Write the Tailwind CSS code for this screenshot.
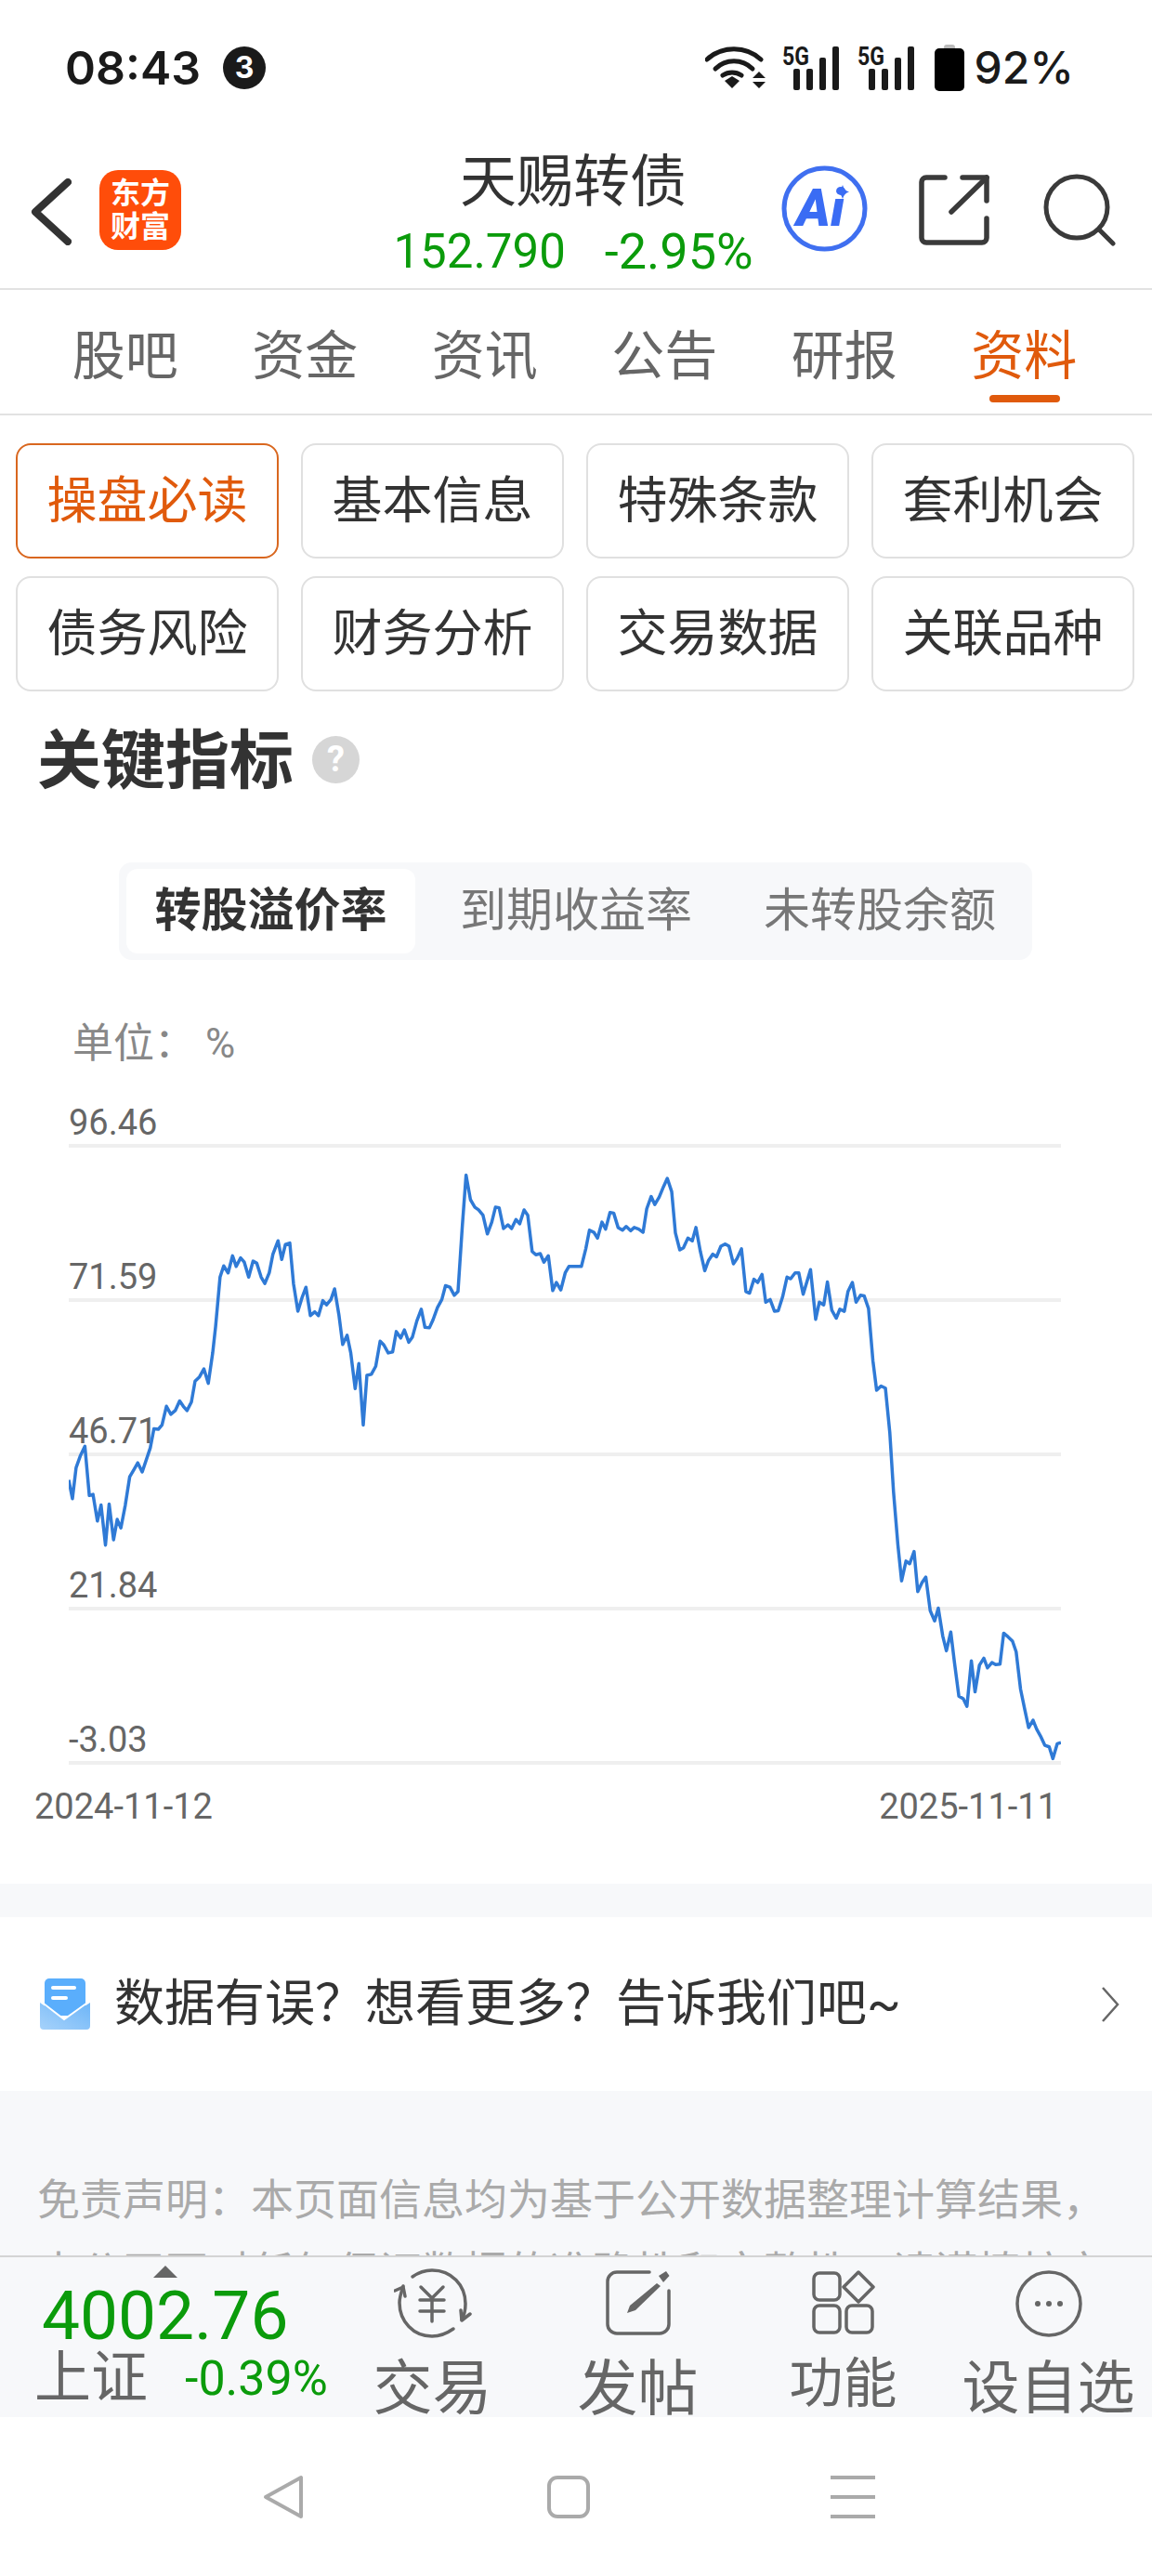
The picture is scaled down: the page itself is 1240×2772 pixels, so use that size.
<!DOCTYPE html>
<html lang="zh-CN">
  <head>
    <meta charset="UTF-8" />
    <meta name="viewport" content="width=device-width, initial-scale=1.0" />
    <title>天赐转债</title>
    <script src="https://cdn.jsdelivr.net/npm/@tailwindcss/browser@4"></script>
  </head>
  <body class="bg-white text-[#333] font-['Roboto','Noto_Sans_CJK_SC',sans-serif]">
    <div class="w-[1240px] h-[2772px] overflow-hidden">
      <!-- Status bar -->
      <div class="h-[146px] flex items-center pl-[70px] pr-[84px] text-[#1a1a1a] font-['Inter',sans-serif]">
        <span class="text-[50px] leading-none font-semibold w-[170px]">08:43</span>
        <span class="w-[46px] h-[46px] rounded-full bg-[#1a1a1a] text-white text-[32px] font-bold flex items-center justify-center">3</span>
        <div class="ml-auto flex items-center">
          <svg width="65" height="46" viewBox="0 0 65 46" fill="none" stroke="#1a1a1a" stroke-width="5" stroke-linecap="round">
            <path d="M2 14 C18 -1 44 -1 60 14" />
            <path d="M11 24 C22 13 40 13 51 24" />
            <path d="M19 31 C25 27 33 27 39 31" />
            <path d="M21 37 L29 32 L37 37 L29 45 Z" fill="#1a1a1a" stroke="none" />
            <path d="M51 34 L58 27 L65 34 Z M51 38 L65 38 L58 45 Z" fill="#1a1a1a" stroke="none" />
          </svg>
          <svg class="ml-[18px]" width="62" height="48" viewBox="0 0 62 48" fill="#1a1a1a">
            <text x="0" y="21" font-size="28" font-weight="700" font-family="Roboto" textLength="29" lengthAdjust="spacingAndGlyphs">5G</text>
            <rect x="12" y="25" width="7" height="23" rx="2" />
            <rect x="26" y="25" width="7" height="23" rx="2" />
            <rect x="40" y="13" width="7" height="35" rx="2" />
            <rect x="54" y="1" width="7" height="47" rx="2" />
          </svg>
          <svg class="ml-[19px]" width="62" height="48" viewBox="0 0 62 48" fill="#1a1a1a">
            <text x="0" y="21" font-size="28" font-weight="700" font-family="Roboto" textLength="29" lengthAdjust="spacingAndGlyphs">5G</text>
            <rect x="12" y="25" width="7" height="23" rx="2" />
            <rect x="26" y="25" width="7" height="23" rx="2" />
            <rect x="40" y="13" width="7" height="35" rx="2" />
            <rect x="54" y="1" width="7" height="47" rx="2" />
          </svg>
          <svg class="ml-[21px]" width="32" height="50" viewBox="0 0 32 50">
            <rect x="10" y="0" width="12" height="6" rx="3" fill="#bbb" />
            <rect x="0" y="4" width="32" height="46" rx="5" fill="#000" />
          </svg>
          <span class="ml-[11px] text-[48px] leading-none font-medium">92%</span>
        </div>
      </div>

      <!-- Header -->
      <div class="h-[166px] flex items-start border-b-2 border-[#e2e2e2]">
        <svg class="ml-[33px] mt-[46px]" width="44" height="72" viewBox="0 0 44 72" fill="none" stroke="#333" stroke-width="8" stroke-linecap="round" stroke-linejoin="round">
          <path d="M40 4 L5 36 L40 68" />
        </svg>
        <div class="ml-[30px] mt-[37px] w-[88px] h-[86px] rounded-[20px] bg-[#ff4d0a] text-white text-[32px] leading-[36px] font-bold text-center flex flex-col justify-center">
          <span>东方</span>
          <span>财富</span>
        </div>
        <div class="w-[438px] ml-[203px] pt-[15px] flex flex-col items-center">
          <div class="text-[61px] leading-[70px]">天赐转债</div>
          <div class="mt-[10px] h-[60px] flex items-center gap-[42px] leading-[60px] text-[#0b9b0b]">
            <span class="text-[51px]">152.790</span>
            <span class="text-[54px]">-2.95%</span>
          </div>
        </div>
        <svg class="ml-[5px] mt-[32px]" width="93" height="93" viewBox="0 0 93 93">
          <circle cx="46.5" cy="46.5" r="43.5" fill="none" stroke="#3f6ff0" stroke-width="5" />
          <text x="16" y="65" font-size="56" font-weight="900" font-style="italic" font-family="Roboto" fill="#3a6cf4">Ai</text>
          <path d="M66 21 Q67.5 27 73 28.5 Q67.5 30 66 36 Q64.5 30 59 28.5 Q64.5 27 66 21 Z" fill="#3a6cf4" />
        </svg>
        <svg class="ml-[55px] mt-[42px]" width="76" height="76" viewBox="0 0 76 76" fill="none" stroke="#3a3a3a" stroke-width="5.5" stroke-linecap="round" stroke-linejoin="round">
          <path d="M28 3 H8 A5 5 0 0 0 3 8 V68 A5 5 0 0 0 8 73 H68 A5 5 0 0 0 73 68 V47" />
          <path d="M47 3 H73 V28" />
          <path d="M73 3 L35 40" />
        </svg>
        <svg class="ml-[58px] mt-[41px]" width="78" height="78" viewBox="0 0 78 78" fill="none" stroke="#3a3a3a" stroke-width="5" stroke-linecap="round">
          <circle cx="36" cy="36" r="33" />
          <path d="M60 60 L75 75" />
        </svg>
      </div>

      <!-- Tabs -->
      <div class="h-[135px] pt-[10px] flex px-[38px] border-b-2 border-[#e2e2e2] text-[57px] text-[#666]">
        <div class="w-[193.5px] flex items-center justify-center">股吧</div>
        <div class="w-[193.5px] flex items-center justify-center">资金</div>
        <div class="w-[193.5px] flex items-center justify-center">资讯</div>
        <div class="w-[193.5px] flex items-center justify-center">公告</div>
        <div class="w-[193.5px] flex items-center justify-center">研报</div>
        <div class="w-[193.5px] flex items-center justify-center relative text-[#e05a0c]">
          资料
          <span class="absolute bottom-[12px] left-[59px] w-[76px] h-[8px] rounded-full bg-[#e05a0c]"></span>
        </div>
      </div>

      <!-- Sub navigation -->
      <div class="pt-[30px] pl-[17px] grid grid-cols-[repeat(4,283px)] gap-x-[24px] gap-y-[19px] text-[54px]">
        <div class="h-[124px] rounded-[16px] border-2 border-[#d9671f] text-[#e05a0c] flex items-center justify-center">操盘必读</div>
        <div class="h-[124px] rounded-[16px] border-2 border-[#e0e0e0] flex items-center justify-center">基本信息</div>
        <div class="h-[124px] rounded-[16px] border-2 border-[#e0e0e0] flex items-center justify-center">特殊条款</div>
        <div class="h-[124px] rounded-[16px] border-2 border-[#e0e0e0] flex items-center justify-center">套利机会</div>
        <div class="h-[124px] rounded-[16px] border-2 border-[#e0e0e0] flex items-center justify-center">债务风险</div>
        <div class="h-[124px] rounded-[16px] border-2 border-[#e0e0e0] flex items-center justify-center">财务分析</div>
        <div class="h-[124px] rounded-[16px] border-2 border-[#e0e0e0] flex items-center justify-center">交易数据</div>
        <div class="h-[124px] rounded-[16px] border-2 border-[#e0e0e0] flex items-center justify-center">关联品种</div>
      </div>

      <!-- Key indicators -->
      <div class="mt-[36px] pl-[40px] h-[80px] flex items-center">
        <span class="text-[69px] leading-[80px] font-bold">关键指标</span>
        <span class="ml-[20px] -mt-[6px] w-[51px] h-[51px] rounded-full bg-[#d6d6d6] text-white text-[38px] font-bold flex items-center justify-center">?</span>
      </div>

      <div class="mt-[68px] ml-[128px] w-[983px] h-[105px] rounded-[14px] bg-[#f7f8fa] flex items-center pl-[8px] text-[50px] text-[#777]">
        <div class="w-[311px] h-[91px] rounded-[12px] bg-white font-bold text-[#333] flex items-center justify-center">转股溢价率</div>
        <div class="w-[346px] text-center">到期收益率</div>
        <div class="w-[308px] text-center">未转股余额</div>
      </div>

      <!-- Chart -->
      <div class="h-[994px]">
        <div class="pt-[62px] pl-[78px] h-[117px] text-[44px] leading-[56px] text-[#888] whitespace-pre">单位： %</div>
        <div class="ml-[74px] w-[1068px] relative text-[38px] leading-[46px] text-[#666]">
          <div class="h-[85px] border-b-4 border-[#efefef] flex items-end">96.46</div>
          <div class="h-[166px] border-b-4 border-[#efefef] flex items-end">71.59</div>
          <div class="h-[166px] border-b-4 border-[#efefef] flex items-end">46.71</div>
          <div class="h-[166px] border-b-4 border-[#efefef] flex items-end">21.84</div>
          <div class="h-[166px] border-b-4 border-[#efefef] flex items-end">-3.03</div>
          <svg class="absolute left-0 top-[83px]" width="1068" height="664" viewBox="94 232 1351 1156" preserveAspectRatio="none" fill="none">
            <polyline vector-effect="non-scaling-stroke" stroke="#2f7ad6" stroke-width="3.5" stroke-linejoin="round" points="94,858 99,893 104,835 110,812 116,795 122,887 127,885 133,935 138,905 144,980 149,903 155,970 160,932 165,948 171,905 177,852 183,838 188,826 194,843 205,798 210,762 216,763 221,755 227,720 233,735 239,728 245,710 250,720 255,728 261,712 266,673 272,665 278,650 284,677 290,620 294,570 300,478 305,457 311,470 317,438 322,458 328,442 333,450 339,478 345,448 350,452 356,478 361,490 367,470 372,435 379,410 384,445 389,417 395,414 400,490 406,542 412,515 417,497 423,550 429,543 434,550 440,522 445,530 451,520 456,500 462,550 467,604 473,587 478,620 484,687 489,640 495,755 500,662 506,660 512,645 518,598 523,605 529,620 535,618 540,580 546,592 551,577 557,600 562,590 568,560 574,538 579,572 585,573 590,558 596,535 602,520 607,494 613,497 619,512 624,505 630,380 635,287 641,333 647,347 652,352 658,362 664,397 670,375 675,347 680,348 686,387 692,380 697,387 703,370 708,378 714,352 719,362 725,430 730,436 736,434 741,450 747,438 753,503 758,488 764,502 770,470 775,458 792,458 798,425 803,390 809,394 814,405 820,375 825,388 831,357 836,358 842,385 848,390 853,383 859,391 864,385 870,388 876,394 881,350 887,327 892,342 898,328 904,308 909,293 915,318 920,395 926,427 931,423 937,405 943,410 948,385 954,430 960,466 965,447 971,435 976,440 982,420 988,416 993,420 999,453 1004,443 1010,425 1016,505 1021,508 1027,482 1032,488 1038,473 1043,525 1049,520 1055,542 1060,541 1066,515 1072,478 1077,481 1083,470 1088,470 1094,510 1104,464 1111,557 1116,525 1122,530 1127,487 1133,540 1139,555 1144,538 1150,542 1155,505 1161,488 1166,525 1172,512 1177,513 1183,537 1189,635 1194,690 1200,682 1206,686 1212,770 1217,880 1223,980 1228,1047 1234,1010 1239,1015 1245,992 1250,1067 1256,1050 1261,1040 1267,1103 1273,1122 1278,1098 1284,1150 1289,1178 1295,1143 1300,1200 1306,1263 1312,1268 1317,1282 1323,1197 1328,1255 1334,1205 1340,1192 1345,1210 1351,1200 1356,1204 1362,1203 1367,1145 1373,1152 1379,1160 1384,1180 1390,1250 1396,1290 1401,1322 1407,1308 1412,1325 1418,1340 1423,1355 1429,1358 1434,1380 1440,1352 1445,1350" />
          </svg>
        </div>
        <div class="mt-[22px] ml-[37px] w-[1101px] flex justify-between text-[38px] leading-[46px] text-[#666]">
          <span>2024-11-12</span>
          <span>2025-11-11</span>
        </div>
      </div>

      <div class="h-[36px] bg-[#f7f8fa]"></div>

      <!-- Feedback -->
      <div class="h-[187px] flex items-center pl-[41px]">
        <svg width="57" height="57" viewBox="0 0 57 57">
          <defs>
            <linearGradient id="mail" x1="0" y1="1" x2="1" y2="0">
              <stop offset="0" stop-color="#a6d2fa" />
              <stop offset="1" stop-color="#6db5f8" />
            </linearGradient>
          </defs>
          <rect x="7" y="1" width="44" height="40" rx="5" fill="#5aaefc" />
          <rect x="14" y="9" width="27" height="4" rx="2" fill="#fff" />
          <rect x="14" y="20" width="18" height="4" rx="2" fill="#fff" />
          <path d="M2 27 L28 45 L56 27 V52 A4 4 0 0 1 52 56 H6 A4 4 0 0 1 2 52 Z" fill="url(#mail)" />
          <path d="M2 25 L28 45 L56 25" fill="none" stroke="#fff" stroke-width="2" />
        </svg>
        <span class="ml-[25px] text-[54px] leading-none">数据有误？想看更多？告诉我们吧~</span>
        <svg class="ml-auto mr-[35px]" width="20" height="38" viewBox="0 0 20 38" fill="none" stroke="#666" stroke-width="2.5">
          <path d="M2 1 L18 19 L2 37" />
        </svg>
      </div>

      <!-- Disclaimer -->
      <div class="h-[177px] overflow-hidden bg-[#f7f8fa] pt-[78px] pl-[40px] text-[46px] leading-[78px] text-[#aaa] whitespace-nowrap">
        <div>免责声明：本页面信息均为基于公开数据整理计算结果，</div>
        <div>本公司不对任何保证数据的准确性和完整性，请谨慎核实</div>
      </div>

      <!-- Bottom toolbar -->
      <div class="h-[174px] border-t-2 border-[#d4d4d4] bg-[#f7f8fa] flex text-[#666]">
        <div class="w-[355px] pl-[37px] flex flex-col items-start">
          <svg class="ml-[128px] mt-[9px]" width="26" height="13" viewBox="0 0 26 13"><path d="M13 0 L26 13 H0 Z" fill="#666" /></svg>
          <div class="ml-[8px] mt-[5px] text-[73px] leading-[72px] text-[#0b9b0b]">4002.76</div>
          <div class="mt-[4px] h-[56px] flex items-center text-[61px]">
            <span>上证</span>
            <span class="ml-[40px] text-[52px] text-[#0b9b0b]">-0.39%</span>
          </div>
        </div>
        <div class="w-[221px] flex flex-col items-center pt-[12px] text-[64px]">
          <svg width="84" height="76" viewBox="0 0 84 76" fill="none" stroke="#666" stroke-width="3.5" stroke-linecap="round" stroke-linejoin="round">
            <path d="M20 9 C27 4 34 2 41 2 C62 2 77 18 77 38 C77 44 76 50 73 55" />
            <path d="M82 49 L73 56 L72 45" />
            <path d="M64 65 C57 70 49 73 41 73 C21 73 6 57 6 37 C6 31 8 25 10 19" />
            <path d="M1 24 L10 20 L12 30" />
            <path d="M29 20 L41 32 L53 20 M28 34 H54 M28 46 H54 M41 32 V57" />
          </svg>
          <span class="leading-[60px] mt-[24px]">交易</span>
        </div>
        <div class="w-[221px] flex flex-col items-center pt-[14px] text-[65px]">
          <svg width="70" height="70" viewBox="0 0 70 70" fill="none" stroke="#666" stroke-width="3.5" stroke-linecap="round">
            <path d="M47 2 H12 A10 10 0 0 0 2 12 V58 A10 10 0 0 0 12 68 H58 A10 10 0 0 0 68 58 V22" />
            <path d="M23 46 L26 38 L55 14 L59 17 L32 43 Z" fill="#666" stroke="none" />
            <path d="M57 6 L65 1 L68.5 6 L62 13 Z" fill="#666" stroke="none" />
          </svg>
          <span class="leading-[60px] mt-[28px]">发帖</span>
        </div>
        <div class="w-[221px] flex flex-col items-center pt-[14px] text-[58px]">
          <svg width="68" height="70" viewBox="0 0 68 70" fill="none" stroke="#666" stroke-width="3.5">
            <rect x="2" y="3" width="28" height="29" rx="6" />
            <path d="M50 2 L66 18 L50 34 L34 18 Z" stroke-linejoin="round" />
            <rect x="2" y="38" width="28" height="29" rx="6" />
            <rect x="37" y="38" width="28" height="29" rx="6" />
          </svg>
          <span class="leading-[60px] mt-[22px]">功能</span>
        </div>
        <div class="w-[221px] flex flex-col items-center pt-[14px] text-[62px] whitespace-nowrap">
          <svg width="72" height="72" viewBox="0 0 72 72" fill="none" stroke="#666" stroke-width="3.5">
            <circle cx="36" cy="36" r="34" />
            <circle cx="24" cy="36" r="3" fill="#666" stroke="none" />
            <circle cx="36" cy="36" r="3" fill="#666" stroke="none" />
            <circle cx="48" cy="36" r="3" fill="#666" stroke="none" />
          </svg>
          <span class="leading-[60px] mt-[26px]">设自选</span>
        </div>
      </div>

      <!-- System navigation -->
      <div class="h-[171px] bg-white flex items-start pl-[282px] pt-[62px] gap-[258px]">
        <svg width="48" height="48" viewBox="0 0 48 48" fill="none" stroke="#aaa" stroke-width="4" stroke-linejoin="round">
          <path d="M42 3 V45 L4 24 Z" />
        </svg>
        <svg width="48" height="48" viewBox="0 0 48 48" fill="none" stroke="#aaa" stroke-width="4">
          <rect x="3" y="3" width="42" height="42" rx="9" />
        </svg>
        <svg width="48" height="48" viewBox="0 0 48 48" fill="none" stroke="#aaa" stroke-width="4">
          <path d="M0 3 H48 M0 24 H48 M0 45 H48" />
        </svg>
      </div>
    </div>
  </body>
</html>
